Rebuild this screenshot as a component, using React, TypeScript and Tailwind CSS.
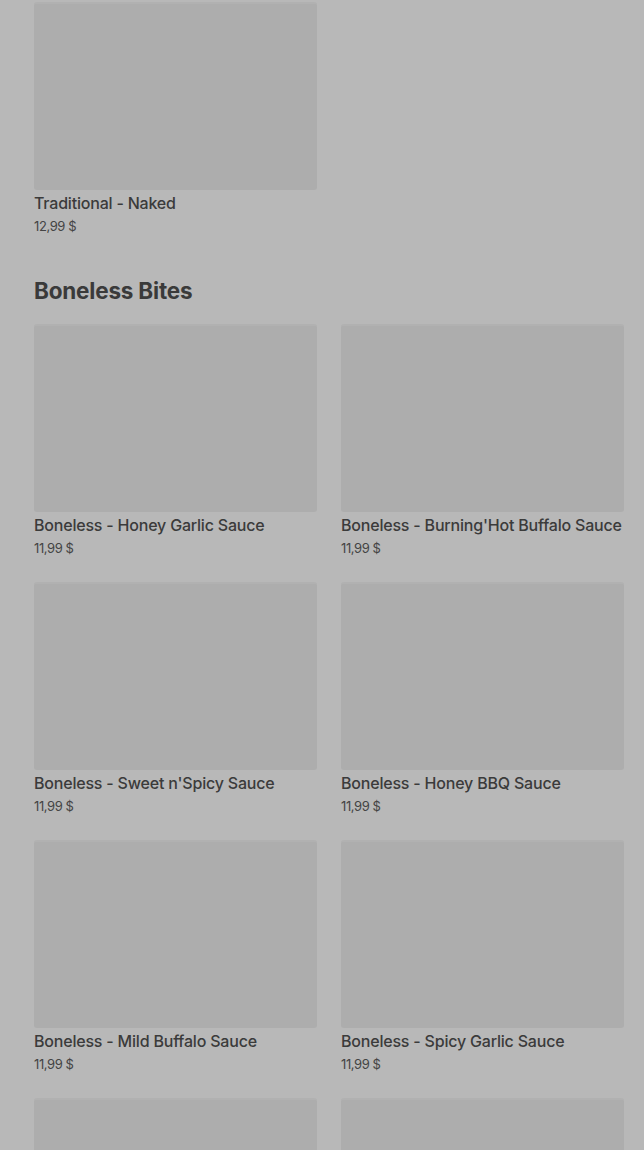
import React from 'react';

type Item = { name?: string; price?: string };

const traditional: Item[] = [{ name: 'Traditional - Naked', price: '12,99 $' }];

const boneless: Item[] = [
  { name: 'Boneless - Honey Garlic Sauce', price: '11,99 $' },
  { name: "Boneless - Burning'Hot Buffalo Sauce", price: '11,99 $' },
  { name: "Boneless - Sweet n'Spicy Sauce", price: '11,99 $' },
  { name: 'Boneless - Honey BBQ Sauce', price: '11,99 $' },
  { name: 'Boneless - Mild Buffalo Sauce', price: '11,99 $' },
  { name: 'Boneless - Spicy Garlic Sauce', price: '11,99 $' },
  {},
  {},
];

const MenuCard: React.FC<{ item: Item }> = ({ item }) => (
  <div className="flex flex-col">
    <div className="h-[188px] rounded-[3px] bg-[#adadad] border-t-2 border-[#b1b1b1]" />
    {item.name && (
      <>
        <div className="mt-[1px] text-[16px] leading-6 font-medium text-[#3b3b3b] tracking-[-0.2px] whitespace-nowrap">
          {item.name}
        </div>
        <div className="mt-[3px] text-[13px] leading-4 text-[#444444] tracking-[-0.4px]">{item.price}</div>
      </>
    )}
  </div>
);

const App: React.FC = () => {
  return (
    <div
      className="h-[1150px] w-full bg-[#b8b8b8] pl-[34px] pr-[20px] pt-[2px] overflow-hidden"
      style={{ fontFamily: 'Inter, "Liberation Sans", sans-serif' }}
    >
      <section>
        <div className="grid grid-cols-2 gap-x-[24px] gap-y-[26px]">
          {traditional.map((it, i) => (
            <MenuCard key={i} item={it} />
          ))}
        </div>
      </section>

      <section className="mt-[43px]">
        <h2 className="text-[22.5px] leading-7 font-bold text-[#3a3a3a] tracking-[-0.2px] mb-[19px]">Boneless Bites</h2>
        <div className="grid grid-cols-2 gap-x-[24px] gap-y-[26px]">
          {boneless.map((it, i) => (
            <MenuCard key={i} item={it} />
          ))}
        </div>
      </section>
    </div>
  );
};

export default App;
